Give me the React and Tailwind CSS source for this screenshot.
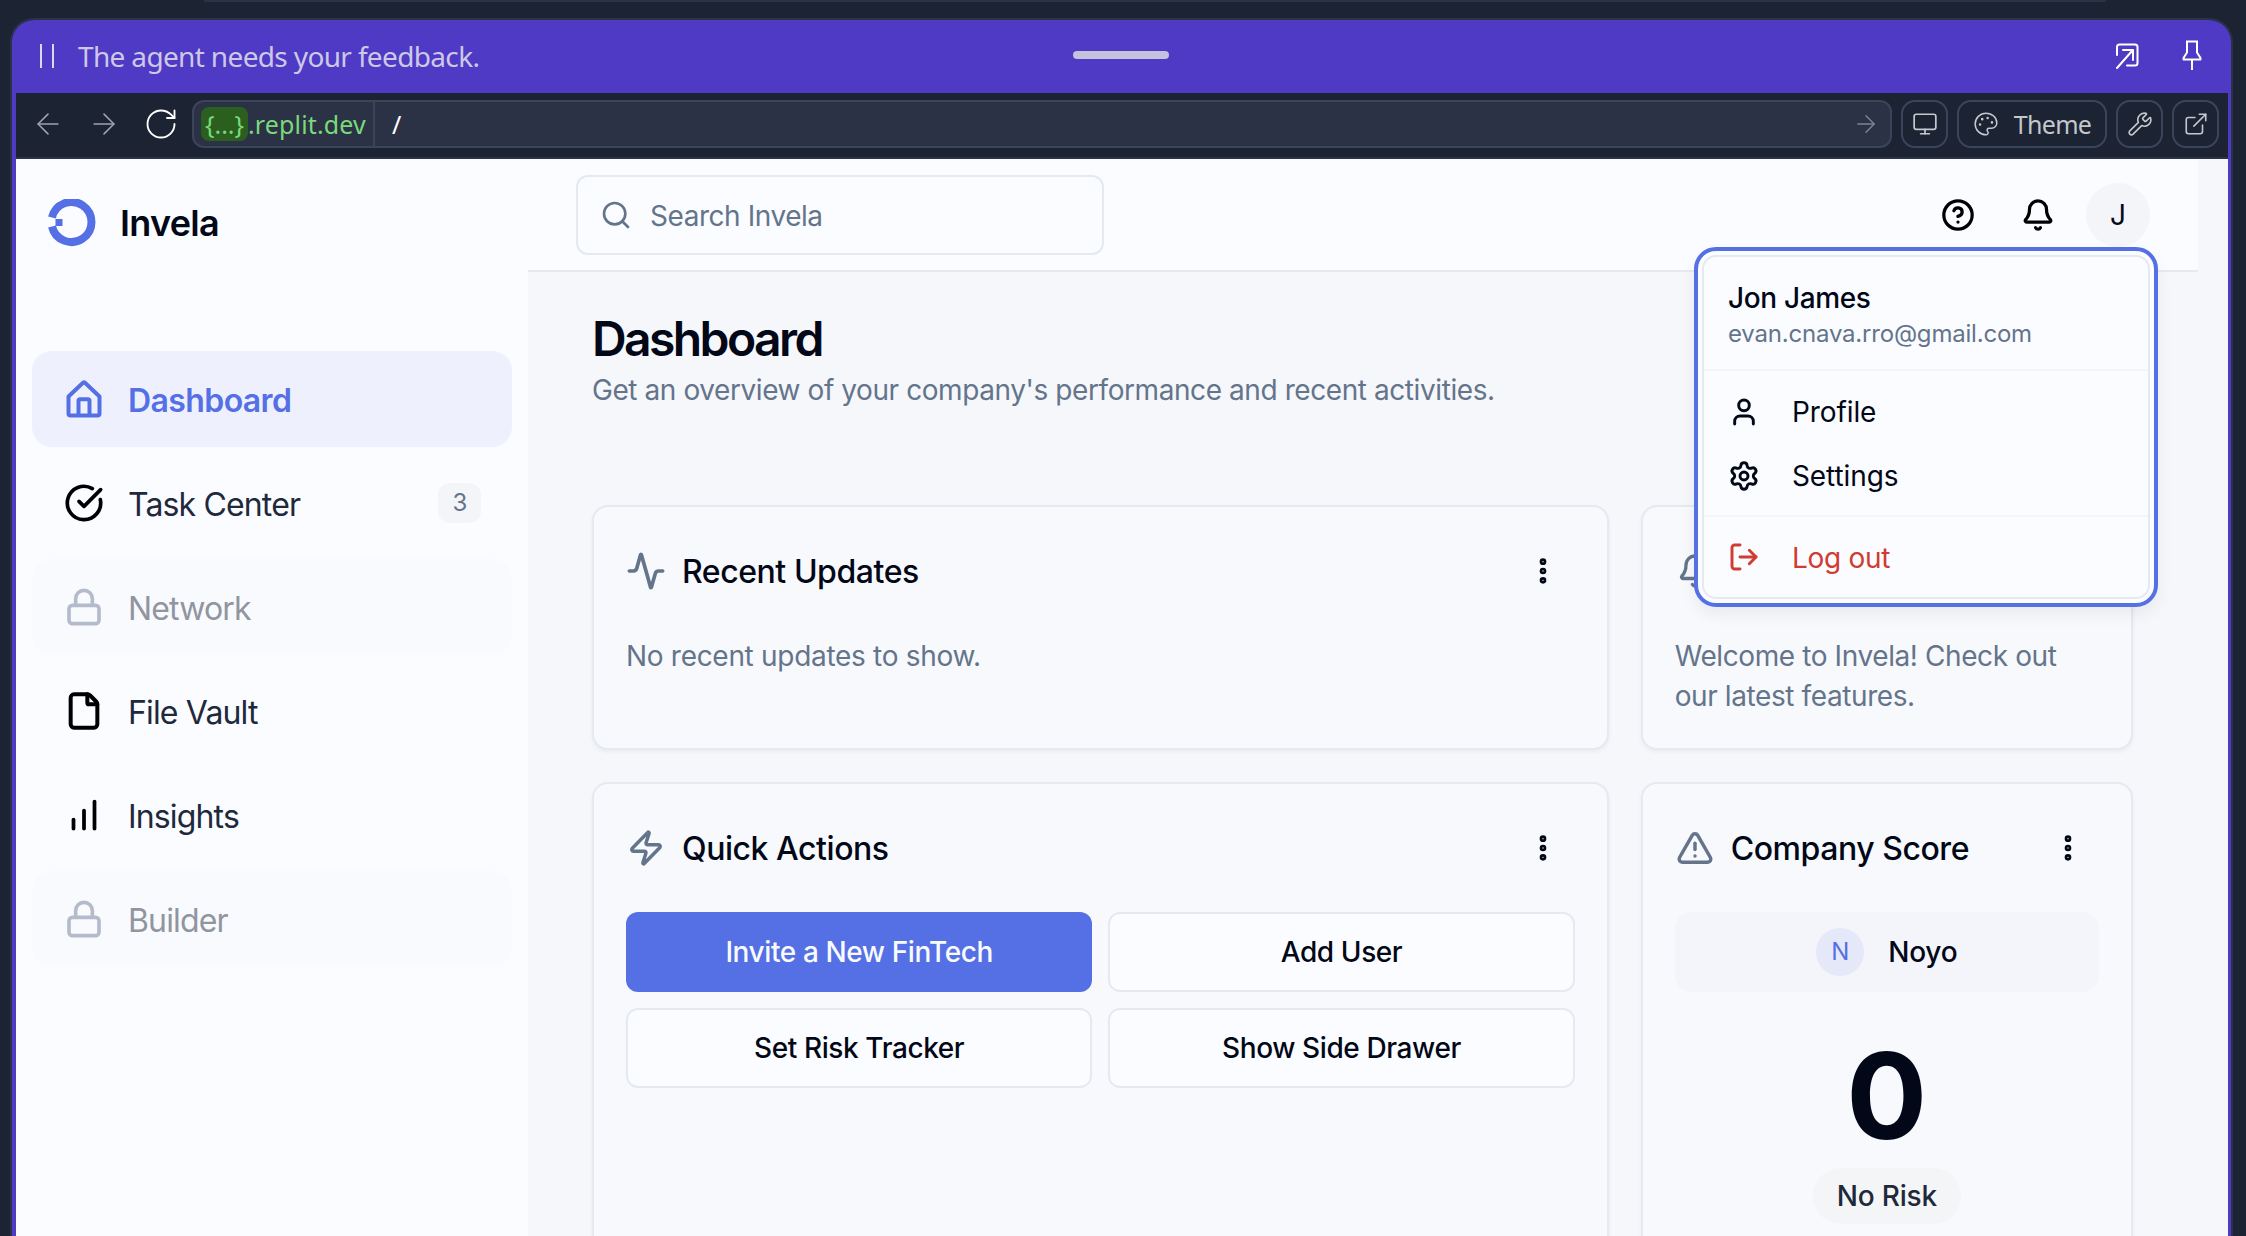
import React from "react";
import {
  Activity, ArrowLeft, ArrowRight, Bell, ChartNoAxesColumnIncreasing, CircleCheckBig, CircleHelp, EllipsisVertical,
  ExternalLink, File, Lock, LogOut, Monitor, Palette, RotateCw, Search, Settings, TriangleAlert, User, Wrench, Zap,
} from "lucide-react";

const plex = "font-['Noto_Sans','Open_Sans',sans-serif]";

function HomeIcon() {
  return (
    <svg width="36" height="38" viewBox="0 0 36 38" fill="none" stroke="#5570e4" strokeWidth="4" strokeLinejoin="round" strokeLinecap="round">
      <path d="M2.500 16.500 17 2.800c.6-.5 1.400-.5 2 0l14.500 13.700v17c0 1.200-.8 2-2 2h-27c-1.200 0-2-.8-2-2z" />
      <path d="M12.500 35V21c0-1.100.6-1.700 1.700-1.700h7.600c1.100 0 1.700.6 1.700 1.700v14" />
    </svg>
  );
}

function Logo() {
  return (
    <svg width="48" height="48" viewBox="0 0 48 48" fill="none" className="shrink-0">
      <path d="M4 18.500A20 20 0 1 1 4 27.500" stroke="#5570e4" strokeWidth="8" />
      <rect x="7.500" y="20" width="7" height="7" fill="#5570e4" />
    </svg>
  );
}

function NavItem({ icon, label, active, locked, badge }) {
  const tone = active
    ? "bg-[#eef0fd] text-[#5570e4] font-semibold tracking-[-0.6px]"
    : locked
      ? "bg-[#f9fafe] text-[#90959f] tracking-[-0.85px]"
      : "text-[#1e293b] tracking-[-0.85px]";
  return (
    <div className={`flex h-[96px] items-center rounded-[20px] pl-[32px] pr-[31px] text-[32px] ${tone}`}>
      <span className="flex w-[40px] shrink-0 items-center justify-center">{icon}</span>
      <span className="ml-[24px] flex-1 pt-[3px]">{label}</span>
      {badge && (
        <span className="flex h-[40px] w-[43px] items-center justify-center rounded-[12px] bg-[#f3f5f9] text-[24px] text-[#64748b]">
          {badge}
        </span>
      )}
    </div>
  );
}

function CardHead({ icon, title, right = "pr-[15px]" }) {
  return (
    <div className={`flex h-[40px] items-center ${right}`}>
      <span className="flex w-[40px] shrink-0 items-center justify-center text-[#64748b]">{icon}</span>
      <span className="ml-[16px] flex-1 pt-[2px] text-[32px] font-medium tracking-[-0.45px] text-[#020817]">{title}</span>
      <EllipsisVertical size={32} strokeWidth={3} className="text-[#020817]" />
    </div>
  );
}

function Card({ children, className = "" }) {
  return (
    <div className={`rounded-[16px] border-2 border-[#e5e9f0] bg-[#f8f9fd] px-[32px] pt-[44px] shadow-[0_2px_4px_rgba(0,0,0,0.05)] ${className}`}>
      {children}
    </div>
  );
}

function ActionButton({ children, primary }) {
  return (
    <div
      className={`flex h-[80px] items-center justify-center rounded-[12px] text-[28px] font-medium tracking-[-0.4px] ${
        primary ? "bg-[#5570e4] text-[#f8fafc]" : "border-2 border-[#e5e9f0] bg-[#fbfcff] text-[#020817]"
      }`}
    >
      {children}
    </div>
  );
}

function ToolButton({ children, className = "w-[47px]" }) {
  return (
    <div className={`flex h-[48px] items-center justify-center rounded-[14px] border-2 border-[#3c445c] text-[#c2c8cc] ${className}`}>
      {children}
    </div>
  );
}

function UserMenu() {
  return (
    <div className="absolute left-[1678px] top-[88px] z-10 w-[464px] rounded-[22px] border-[4px] border-[#5570e4] bg-[#fbfcff] p-[4px] shadow-[0_8px_16px_rgba(0,0,0,0.06)]">
      <div className="h-[344px] rounded-[14px] border-2 border-[#e5e9f0] bg-[#fbfcff]">
        <div className="flex h-[114px] flex-col border-b-2 border-[#f3f5f9] pl-[24px] pt-[22px]">
          <span className="text-[28px] font-medium leading-[38px] tracking-[-0.35px] text-[#020817]">Jon James</span>
          <span className="text-[24px] leading-[34px] tracking-[-0.2px] text-[#64748b]">evan.cnava.rro@gmail.com</span>
        </div>
        <div className="flex h-[146px] flex-col border-b-2 border-[#f3f5f9] pt-[9px] text-[28px] tracking-[-0.1px] text-[#020817]">
          <div className="flex h-[64px] items-center pl-[24px]">
            <User size={32} strokeWidth={2.2} />
            <span className="ml-[32px]">Profile</span>
          </div>
          <div className="flex h-[64px] items-center pl-[24px]">
            <Settings size={32} strokeWidth={2.2} />
            <span className="ml-[32px]">Settings</span>
          </div>
        </div>
        <div className="flex h-[80px] items-center pl-[24px] text-[28px] tracking-[-0.3px] text-[#d03b32]">
          <LogOut size={32} strokeWidth={2.2} />
          <span className="ml-[32px] pt-[2px]">Log out</span>
        </div>
      </div>
    </div>
  );
}

export default function App() {
  return (
    <div className="flex h-[1236px] w-[2246px] flex-col overflow-hidden bg-[#1c2333] font-['Inter',sans-serif]">
      <div className="mx-[204px] h-[2px] w-[1902px] bg-[#2b3245]" />
      <div className="ml-[10px] mr-[13px] mt-[16px] flex min-h-0 flex-1 flex-col rounded-t-[24px] border-x-2 border-t-2 border-[#2b3245]">
        <div className="flex min-h-0 flex-1 flex-col overflow-hidden rounded-t-[22px] bg-[#4e3ac4] px-[4px] pr-[3px]">
          <div className={`relative flex h-[73px] shrink-0 items-center pl-[23px] pr-[24px] text-[#cdc8e6] ${plex}`}>
            <svg width="16" height="24" viewBox="0 0 16 24" className="mt-[-2px] shrink-0" stroke="#dcd8ee" strokeWidth="2">
              <path d="M2 0v24M14 0v24" />
            </svg>
            <span className="ml-[23px] mt-[-2px] flex-1 text-[28px] tracking-[-0.65px]">The agent needs your feedback.</span>
            <div className="absolute left-[1057px] top-[31px] h-[8px] w-[96px] rounded-full bg-[#c6c2de]" />
            <svg width="24" height="26" viewBox="0 0 24 26" fill="none" stroke="#fff" strokeWidth="2" strokeLinecap="round" strokeLinejoin="round" className="mr-[43px] mt-[-2px]">
              <path d="M2 12V4c0-1.500 1-2.500 2.500-2.500H20c1.500 0 2.500 1 2.500 2.500v16c0 1.500-1 2.500-2.500 2.500h-8" />
              <path d="M2 25 17 8M8 7h10v10" />
            </svg>
            <svg width="20" height="30" viewBox="0 0 20 30" fill="none" stroke="#fff" strokeWidth="2" strokeLinejoin="round" className="mr-[2px] mt-[-3px]">
              <path d="M4 1.500h12M5 1.500v11L1.500 18v1.500h17V18L15 12.500v-11M10 19.500V30" />
            </svg>
          </div>

          <div className="flex h-[66px] shrink-0 items-center border-b-2 border-[#2b3245] bg-[#1c2333] pb-[2px] pl-[15px] pr-[9px]">
            <ArrowLeft size={34} strokeWidth={1.1} className="text-[#9da2ad]" />
            <ArrowRight size={34} strokeWidth={1.1} className="ml-[22px] text-[#9da2ad]" />
            <RotateCw size={36} strokeWidth={1.25} className="ml-[22px] text-white" />
            <div className={`ml-[13px] flex h-[48px] flex-1 items-center rounded-[12px] border-2 border-[#3c445c] bg-[#2b3245] pr-[10px] ${plex}`}>
              <span className="ml-[7px] flex h-[34px] w-[47px] items-center justify-center rounded-[8px] bg-[#2b5f1f] pt-[2px] text-[25px] text-[#7ad97a]">{"{...}"}</span>
              <span className="flex h-full w-[127px] items-center border-r-2 border-[#3c445c] pt-[2px] text-[25px] tracking-[0.15px] text-[#7ad97a]">.replit.dev</span>
              <span className="ml-[17px] flex-1 pt-[2px] text-[25px] text-white">/</span>
              <ArrowRight size={28} strokeWidth={1.2} className="text-[#7d8390]" />
            </div>
            <ToolButton className="ml-[9px] w-[47px]"><Monitor size={26} strokeWidth={1.6} /></ToolButton>
            <ToolButton className="ml-[9px] w-[150px]">
              <Palette size={26} strokeWidth={1.4} />
              <span className={`ml-[15px] pt-[2px] text-[25px] tracking-[-0.7px] ${plex}`}>Theme</span>
            </ToolButton>
            <ToolButton className="ml-[9px] w-[47px]"><Wrench size={26} strokeWidth={1.5} /></ToolButton>
            <ToolButton className="ml-[9px] w-[47px]"><ExternalLink size={26} strokeWidth={1.5} /></ToolButton>
          </div>

          <div className="relative flex min-h-0 flex-1 bg-[#f5f7fb]">
            <aside className="flex w-[512px] shrink-0 flex-col bg-[#fbfcff] px-[16px]">
              <div className="mt-[40px] flex h-[48px] items-center pl-[16px]">
                <Logo />
                <span className="ml-[24px] text-[36px] font-semibold tracking-[-0.7px] text-[#020817]">Invela</span>
              </div>
              <nav className="mt-[104px] flex flex-col gap-[8px]">
                <NavItem active icon={<HomeIcon />} label="Dashboard" />
                <NavItem badge="3" icon={<CircleCheckBig size={40} strokeWidth={2.2} className="text-black" />} label="Task Center" />
                <NavItem locked icon={<Lock size={40} strokeWidth={2.2} className="text-[#b4bccb]" />} label="Network" />
                <NavItem icon={<File size={40} strokeWidth={2.4} className="text-black" />} label="File Vault" />
                <NavItem icon={<ChartNoAxesColumnIncreasing size={36} strokeWidth={2.5} className="text-black" />} label="Insights" />
                <NavItem locked icon={<Lock size={40} strokeWidth={2.2} className="text-[#b4bccb]" />} label="Builder" />
              </nav>
            </aside>

            <main className="min-w-0 flex-1">
              <header className="mr-[30px] flex h-[113px] items-center border-b-2 border-[#e5e9f0] bg-[#fbfcff] pl-[48px] pr-[48px]">
                <div className="flex h-[80px] w-[528px] items-center rounded-[12px] border-2 border-[#e5e9f0] bg-[#fbfcff] pl-[22px]">
                  <Search size={32} strokeWidth={2} className="text-[#64748b]" />
                  <span className="ml-[18px] pt-[2px] text-[28px] tracking-[-0.45px] text-[#64748b]">Search Invela</span>
                </div>
                <div className="flex-1" />
                <CircleHelp size={34} strokeWidth={2.3} className="mr-[46px] mt-[1px] text-black" />
                <Bell size={34} strokeWidth={2.3} className="mr-[31px] mt-[1px] text-black" />
                <div className="flex h-[64px] w-[64px] items-center justify-center rounded-full bg-[#f3f5f9] text-[28px] text-[#020817]">J</div>
              </header>

              <div className="pl-[64px] pr-[95px]">
                <h1 className="mt-[42px] text-[48px] font-semibold leading-[50px] tracking-[-2.6px] text-[#020817]">Dashboard</h1>
                <p className="mt-[6px] text-[28px] leading-[40px] tracking-[-0.42px] text-[#64748b]">Get an overview of your company's performance and recent activities.</p>

                <div className="mt-[95px] grid grid-cols-3 gap-[32px]">
                  <Card className="col-span-2 h-[245px]">
                    <CardHead icon={<Activity size={40} strokeWidth={2.2} />} title="Recent Updates" right="pr-[16px]" />
                    <p className="mt-[45px] text-[28px] leading-[40px] tracking-[-0.3px] text-[#64748b]">No recent updates to show.</p>
                  </Card>
                  <Card className="h-[245px]">
                    <div className="flex h-[40px] items-center text-[#64748b]">
                      <Bell size={36} strokeWidth={2.2} className="ml-[2px]" />
                    </div>
                    <p className="mt-[45px] text-[28px] leading-[40px] tracking-[-0.4px] text-[#64748b]">Welcome to Invela! Check out our latest features.</p>
                  </Card>
                  <Card className="col-span-2 h-[500px]">
                    <CardHead icon={<Zap size={38} strokeWidth={2.2} />} title="Quick Actions" right="pr-[16px]" />
                    <div className="mt-[44px] grid grid-cols-2 gap-[16px]">
                      <ActionButton primary>Invite a New FinTech</ActionButton>
                      <ActionButton>Add User</ActionButton>
                      <ActionButton>Set Risk Tracker</ActionButton>
                      <ActionButton>Show Side Drawer</ActionButton>
                    </div>
                  </Card>
                  <Card className="h-[500px]">
                    <CardHead icon={<TriangleAlert size={38} strokeWidth={2.2} />} title="Company Score" />
                    <div className="mt-[44px] flex h-[80px] items-center justify-center rounded-[16px] bg-[#f3f5fa]">
                      <span className="flex h-[48px] w-[48px] items-center justify-center rounded-full bg-[#e4e8f9] text-[24px] text-[#5570e4]">N</span>
                      <span className="ml-[24px] text-[28px] font-medium tracking-[-0.2px] text-[#020817]">Noyo</span>
                    </div>
                    <div className="mt-[32px] text-center text-[120px] font-bold leading-[144px] text-[#020817]">0</div>
                    <div className="mt-0 flex justify-center">
                      <span className="flex h-[56px] w-[148px] items-center justify-center rounded-full bg-[#f4f5f7] text-[28px] font-medium tracking-[-0.2px] text-[#1e293b]">No Risk</span>
                    </div>
                  </Card>
                </div>
              </div>
            </main>
            <UserMenu />
          </div>
        </div>
      </div>
    </div>
  );
}
